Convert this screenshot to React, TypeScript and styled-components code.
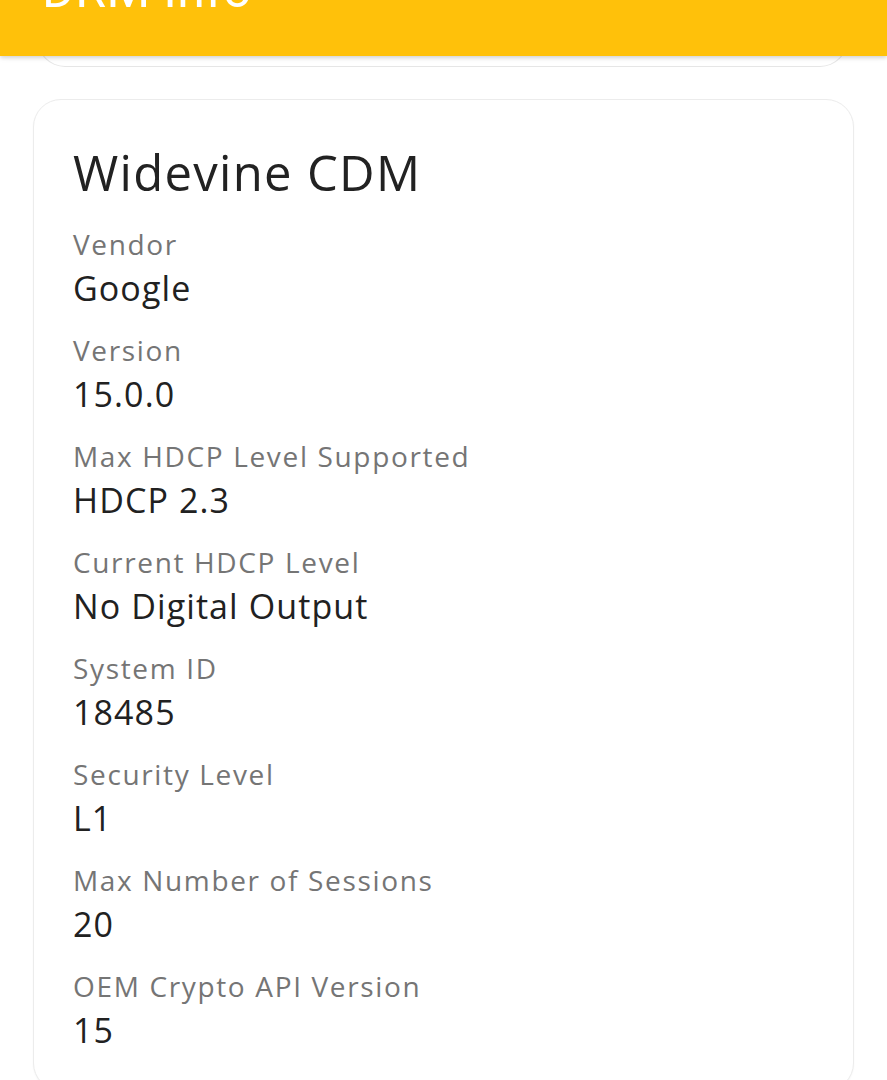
import React from "react";
import styled, { createGlobalStyle } from "styled-components";

const GlobalStyle = createGlobalStyle`
  html, body {
    margin: 0;
    padding: 0;
    background: #ffffff;
    font-family: "Open Sans", "Noto Sans", sans-serif;
    overflow: hidden;
  }
`;

const Page = styled.div`
  width: 887px;
  height: 1080px;
  display: flex;
  flex-direction: column;
  overflow: hidden;
  background: #fff;
`;

const AppBar = styled.header`
  position: sticky;
  top: 0;
  z-index: 2;
  height: 56px;
  flex: none;
  background: #ffc10a;
  box-shadow: 0 2px 4px rgba(0, 0, 0, 0.14), 0 1px 8px rgba(0, 0, 0, 0.06);
  overflow: hidden;
  padding-left: 42px;
`;

const AppTitle = styled.h1`
  margin: -38px 0 0 0;
  font-family: Roboto, "Noto Sans", sans-serif;
  font-weight: 400;
  font-size: 50px;
  line-height: 56px;
  color: #ffffff;
  letter-spacing: 0.4px;
`;

const Content = styled.main`
  display: flex;
  flex-direction: column;
  gap: 32px;
  padding: 0 33px;
`;

const PrevCardTail = styled.div`
  margin: -30px 6px 0 4px;
  height: 40px;
  border: 1.5px solid #e6e6e6;
  border-top: none;
  border-radius: 0 0 28px 28px;
  background: #fff;
`;

const Card = styled.section`
  border: 1.5px solid #ececec;
  border-radius: 28px;
  background: #fff;
  padding: 40px 39px 36px;
  display: flex;
  flex-direction: column;
  box-shadow: 0 1px 2px rgba(0, 0, 0, 0.04);
`;

const CardTitle = styled.h2`
  margin: 0 0 20px 0;
  font-weight: 400;
  font-size: 49px;
  line-height: 64px;
  color: #222222;
  letter-spacing: 1.3px;
`;

const FieldList = styled.dl`
  margin: 0;
  display: flex;
  flex-direction: column;
  gap: 18px;
`;

const Field = styled.div`
  display: flex;
  flex-direction: column;
`;

const Label = styled.dt`
  font-size: 28px;
  line-height: 40px;
  color: #757575;
  letter-spacing: 1.65px;
`;

const Value = styled.dd`
  margin: 0;
  font-size: 34px;
  line-height: 48px;
  color: #212121;
  letter-spacing: 1.1px;
`;

const fields: [string, string][] = [
  ["Vendor", "Google"],
  ["Version", "15.0.0"],
  ["Max HDCP Level Supported", "HDCP 2.3"],
  ["Current HDCP Level", "No Digital Output"],
  ["System ID", "18485"],
  ["Security Level", "L1"],
  ["Max Number of Sessions", "20"],
  ["OEM Crypto API Version", "15"],
];

export default function App() {
  return (
    <>
      <GlobalStyle />
      <Page>
        <AppBar>
          <AppTitle>DRM Info</AppTitle>
        </AppBar>
        <Content>
          <PrevCardTail />
          <Card>
            <CardTitle>Widevine CDM</CardTitle>
            <FieldList>
              {fields.map(([label, value]) => (
                <Field key={label}>
                  <Label>{label}</Label>
                  <Value>{value}</Value>
                </Field>
              ))}
            </FieldList>
          </Card>
        </Content>
      </Page>
    </>
  );
}
